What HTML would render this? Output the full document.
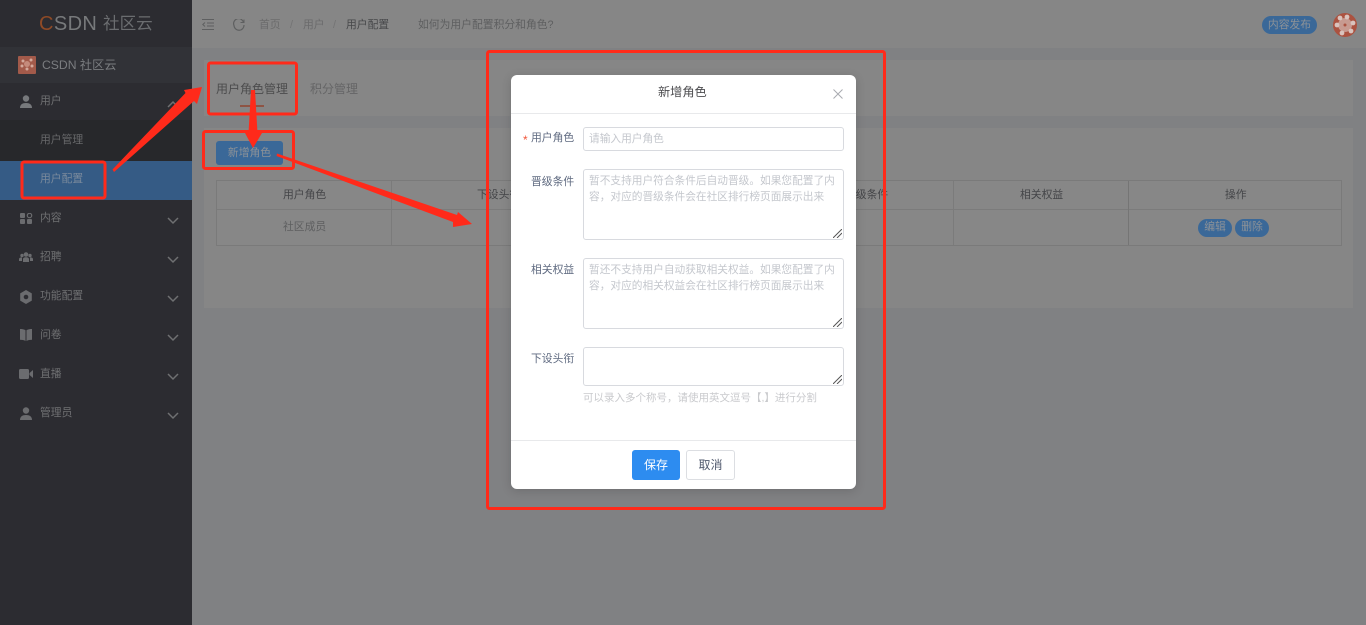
<!DOCTYPE html>
<html lang="zh-CN"><head><meta charset="utf-8"><title>用户配置</title>
<style>
*{box-sizing:border-box;margin:0;padding:0}
html,body{width:1366px;height:625px;overflow:hidden;background:#808183;font-family:"Liberation Sans","Noto Sans CJK SC","WenQuanYi Zen Hei",sans-serif;font-size:10.8px}
.a{position:absolute;white-space:nowrap}
.side{position:absolute;left:0;top:0;width:192px;height:625px;background:#2c2c31}
.mi{position:absolute;left:40px;color:#6f7072;font-size:10.8px;line-height:16px;white-space:nowrap}
.ic{position:absolute;left:19px}
.chev{position:absolute;left:167px}
.pill{position:absolute;background:#3a6898;color:#8d9297;border-radius:10px;text-align:center;white-space:nowrap}
.th{position:absolute;top:187px;color:#444548;font-size:10.8px;line-height:16px;white-space:nowrap}
.ln{position:absolute;background:#7b7b7b}
.lab{position:absolute;left:531px;color:#5f6a80;font-size:10.8px;line-height:16px;white-space:nowrap;width:44px}
.inp{position:absolute;left:583px;width:261px;border:1px solid #d8dadf;border-radius:3px;background:#fff;color:#c4c7cd;font-size:10.7px;line-height:16px;padding:0 5px;white-space:normal}
.grip{position:absolute;right:1px;bottom:1px}
</style></head><body>
<div class="side">
<div class="a" style="left:0;top:47px;width:192px;height:36px;background:#313237"></div>
<div class="a" style="left:0;top:120px;width:192px;height:41px;background:#27282b"></div>
<div class="a" style="left:0;top:161px;width:192px;height:39px;background:#355b85"></div>
<div class="a" style="left:39px;top:12px;font-size:20px;line-height:24px;letter-spacing:.4px;color:#77797b"><span style="color:#8e4a26">C</span>SDN</div>
<div class="a" style="left:103px;top:14px;font-size:16.600px;line-height:20px;color:#6b6d70">社区云</div>
<svg class="a" style="left:18px;top:56px" width="18" height="18"><rect width="18" height="18" rx="1" fill="#a25a4a"/><circle cx="9" cy="8" r="3" fill="#c58b7c"/><circle cx="5" cy="5" r="1.500" fill="#d3a99c"/><circle cx="13" cy="4" r="1.500" fill="#d3a99c"/><circle cx="4" cy="10" r="1.500" fill="#d3a99c"/><circle cx="14" cy="10" r="1.500" fill="#d3a99c"/><circle cx="9" cy="13" r="1.500" fill="#d3a99c"/></svg>
<div class="a" style="left:42px;top:57px;font-size:12.200px;line-height:17px;color:#7b7d80">CSDN 社区云</div>

<svg class="ic" style="top:95px" width="14" height="13" fill="#77797c"><circle cx="7" cy="3.500" r="3.200"/><path d="M1 13c0-3.600 2.500-5 6-5s6 1.400 6 5z"/></svg>
<div class="mi" style="top:93px">用户</div>
<svg class="chev" style="top:100px" width="12" height="8" fill="none" stroke="#6f7072" stroke-width="1.500"><path d="M1 7l5-5 5 5"/></svg>
<div class="mi" style="top:132px;color:#67686a">用户管理</div>
<div class="mi" style="top:171px;color:#7a8a9c">用户配置</div>

<svg class="ic" style="top:213px" width="14" height="11" fill="#6b6c6f"><rect x="1" y="0" width="5" height="5" rx="1"/><rect x="1" y="6" width="5" height="5" rx="1"/><rect x="8" y="6" width="5" height="5" rx="1"/><circle cx="10.500" cy="2.500" r="2.200" fill="none" stroke="#6b6c6f" stroke-width="1.200"/></svg>
<div class="mi" style="top:210px">内容</div>
<svg class="chev" style="top:217px" width="12" height="8" fill="none" stroke="#6f7072" stroke-width="1.500"><path d="M1 1l5 5 5-5"/></svg>

<svg class="ic" style="top:252px" width="14" height="10" fill="#6b6c6f"><circle cx="7" cy="2.500" r="2.300"/><circle cx="3" cy="3.500" r="1.700"/><circle cx="11" cy="3.500" r="1.700"/><path d="M4 10V7c0-1 1.300-1.800 3-1.800s3 .8 3 1.800v3zM0 9V7c0-.9 1-1.600 2.500-1.600l.5.100V9zM14 9V7c0-.9-1-1.600-2.500-1.600l-.5.100V9z"/></svg>
<div class="mi" style="top:249px">招聘</div>
<svg class="chev" style="top:256px" width="12" height="8" fill="none" stroke="#6f7072" stroke-width="1.500"><path d="M1 1l5 5 5-5"/></svg>

<svg class="ic" style="top:290px" width="14" height="14" fill="#6b6c6f"><path fill-rule="evenodd" d="M7 0l5.800 3.400v7.200L7 14l-5.800-3.400V3.400zM7 4.700a2.300 2.300 0 100 4.600 2.300 2.300 0 000-4.600z"/></svg>
<div class="mi" style="top:288px">功能配置</div>
<svg class="chev" style="top:295px" width="12" height="8" fill="none" stroke="#6f7072" stroke-width="1.500"><path d="M1 1l5 5 5-5"/></svg>

<svg class="ic" style="top:329px" width="14" height="12" fill="#6b6c6f"><path d="M1 0c2 0 4 .3 5.500 1.200V12C5 11.200 3 10.800 1 10.800zM13 0c-2 0-4 .3-5.500 1.200V12c1.500-.8 3.500-1.200 5.500-1.200z"/></svg>
<div class="mi" style="top:327px">问卷</div>
<svg class="chev" style="top:334px" width="12" height="8" fill="none" stroke="#6f7072" stroke-width="1.500"><path d="M1 1l5 5 5-5"/></svg>

<svg class="ic" style="top:369px;left:19px" width="14" height="10" fill="#6b6c6f"><rect x="0" y="0" width="10" height="10" rx="1.500"/><path d="M10.500 4L14 1v8l-3.500-3z"/></svg>
<div class="mi" style="top:366px">直播</div>
<svg class="chev" style="top:373px" width="12" height="8" fill="none" stroke="#6f7072" stroke-width="1.500"><path d="M1 1l5 5 5-5"/></svg>

<svg class="ic" style="top:407px" width="14" height="13" fill="#6b6c6f"><circle cx="7" cy="3.500" r="3.200"/><path d="M1 13c0-3.600 2.500-5 6-5s6 1.400 6 5z"/></svg>
<div class="mi" style="top:405px">管理员</div>
<svg class="chev" style="top:412px" width="12" height="8" fill="none" stroke="#6f7072" stroke-width="1.500"><path d="M1 1l5 5 5-5"/></svg>
</div>

<!-- header -->
<div class="a" style="left:192px;top:0;width:1174px;height:48px;background:#868686"></div>
<svg class="a" style="left:202px;top:19px" width="12" height="11" fill="none" stroke="#5e5f60" stroke-width="1"><path d="M0 .5h12M5 4h7M5 7h7M0 10.500h12M3 3.500L.8 5.500 3 7.500"/></svg>
<svg class="a" style="left:233px;top:19px" width="12" height="12" fill="none" stroke="#5e5f60" stroke-width="1.200"><path d="M10.500 3.500A5 5 0 101 6.500 5 5 0 0011 6"/><path d="M7.500 3.500h3.500V.5" stroke-width="1"/></svg>
<div class="a" style="left:259px;top:17px;line-height:16px;color:#6b6b6c">首页</div>
<div class="a" style="left:290px;top:17px;line-height:16px;color:#737374">/</div>
<div class="a" style="left:303px;top:17px;line-height:16px;color:#6b6b6c">用户</div>
<div class="a" style="left:333px;top:17px;line-height:16px;color:#737374">/</div>
<div class="a" style="left:346px;top:17px;line-height:16px;color:#47484a">用户配置</div>
<div class="a" style="left:418px;top:17px;line-height:16px;color:#5e5f60">如何为用户配置积分和角色?</div>
<div class="pill" style="left:1262px;top:16px;width:55px;height:18px;line-height:18px">内容发布</div>
<svg class="a" style="left:1333px;top:13px" width="24" height="24"><circle cx="12" cy="12" r="12" fill="#ab5240"/><circle cx="12" cy="12" r="7" fill="#c79a90"/><circle cx="12" cy="12" r="1.500" fill="#ab5240"/><circle cx="14" cy="4" r="2.400" fill="#d9c3bd"/><circle cx="20" cy="10" r="2.400" fill="#d9c3bd"/><circle cx="18" cy="18" r="2.400" fill="#d9c3bd"/><circle cx="9" cy="20" r="2.400" fill="#d9c3bd"/><circle cx="4" cy="12" r="2.400" fill="#d9c3bd"/><circle cx="7" cy="5" r="2.400" fill="#d9c3bd"/></svg>

<!-- cards -->
<div class="a" style="left:204px;top:60px;width:1149px;height:56px;background:#868686"></div>
<div class="a" style="left:216px;top:81px;font-size:12px;line-height:16px;color:#4c4c4d">用户角色管理</div>
<div class="a" style="left:310px;top:81px;font-size:12px;line-height:16px;color:#656566">积分管理</div>
<div class="a" style="left:240px;top:105px;width:24px;height:2px;background:#8e5444"></div>
<div class="a" style="left:204px;top:128px;width:1149px;height:180px;background:#868686"></div>
<div class="a" style="left:216px;top:141px;width:67px;height:24px;background:#3a6898;border-radius:3px;color:#8d9297;text-align:center;line-height:24px">新增角色</div>

<!-- table -->
<div class="a" style="left:216px;top:180px;width:1126px;height:66px;background:#878787;border:1px solid #7a7a7a"></div>
<div class="ln" style="left:217px;top:209px;width:1124px;height:1px"></div>
<div class="ln" style="left:391px;top:181px;width:1px;height:64px"></div>
<div class="ln" style="left:953px;top:181px;width:1px;height:64px"></div>
<div class="ln" style="left:1128px;top:181px;width:1px;height:64px;background:#757575"></div>
<div class="th" style="left:283px">用户角色</div>
<div class="th" style="left:477px">下设头衔</div>
<div class="th" style="left:845px">晋级条件</div>
<div class="th" style="left:1020px">相关权益</div>
<div class="th" style="left:1225px">操作</div>
<div class="a" style="left:283px;top:219px;line-height:16px;color:#5e5f60">社区成员</div>
<div class="pill" style="left:1198px;top:219px;width:34px;height:18px;line-height:17px;border-radius:9px">编辑</div>
<div class="pill" style="left:1235px;top:219px;width:34px;height:18px;line-height:17px;border-radius:9px">删除</div>

<!-- modal -->
<div class="a" style="left:511px;top:75px;width:345px;height:414px;background:#fff;border-radius:6px;box-shadow:0 2px 10px rgba(0,0,0,.15)"></div>
<div class="a" style="left:511px;top:113px;width:345px;height:1px;background:#e8e9eb"></div>
<div class="a" style="left:511px;top:440px;width:345px;height:1px;background:#e8e9eb"></div>
<div class="a" style="left:658px;top:84px;font-size:12.200px;line-height:16px;color:#4c4c4f">新增角色</div>
<svg class="a" style="left:833px;top:89px" width="10" height="10" fill="none" stroke="#a9abb0" stroke-width="1"><path d="M.5.5l9 9M9.500.5l-9 9"/></svg>
<div class="a" style="left:523px;top:132px;font-size:12px;line-height:16px;color:#f0553a">*</div>
<div class="lab" style="top:130px">用户角色</div>
<div class="inp" style="top:127px;height:24px;line-height:22px">请输入用户角色</div>
<div class="lab" style="top:174px">晋级条件</div>
<div class="inp" style="top:169px;height:71px;padding-top:3px">暂不支持用户符合条件后自动晋级。如果您配置了内容，对应的晋级条件会在社区排行榜页面展示出来<svg class="grip" width="9" height="9" stroke="#555" stroke-width="1"><path d="M0 9l9-9M4 9l5-5"/></svg></div>
<div class="lab" style="top:262px">相关权益</div>
<div class="inp" style="top:258px;height:71px;padding-top:3px">暂还不支持用户自动获取相关权益。如果您配置了内容，对应的相关权益会在社区排行榜页面展示出来<svg class="grip" width="9" height="9" stroke="#555" stroke-width="1"><path d="M0 9l9-9M4 9l5-5"/></svg></div>
<div class="lab" style="top:351px">下设头衔</div>
<div class="inp" style="top:347px;height:39px"><svg class="grip" width="9" height="9" stroke="#555" stroke-width="1"><path d="M0 9l9-9M4 9l5-5"/></svg></div>
<div class="a" style="left:583px;top:390px;font-size:10.500px;line-height:16px;color:#c9cacd">可以录入多个称号，请使用英文逗号【,】进行分割</div>
<div class="a" style="left:632px;top:450px;width:48px;height:30px;background:#2d8cf0;border-radius:3px;color:#fff;text-align:center;line-height:30px;font-size:12px">保存</div>
<div class="a" style="left:686px;top:450px;width:49px;height:30px;background:#fff;border:1px solid #dcdee2;border-radius:3px;color:#515a6e;text-align:center;line-height:28px;font-size:12px">取消</div>

<!-- annotations -->
<svg class="a" style="left:0;top:0" width="1366" height="625" fill="none">
<g stroke="#ff2a1a" stroke-width="3" stroke-linejoin="round">
<rect x="22" y="162" width="83" height="36" rx="2"/>
<rect x="208.500" y="63" width="88" height="51" rx="2"/>
<rect x="203.500" y="131.500" width="90" height="37" rx="2"/>
<rect x="487.500" y="51.500" width="397" height="457" rx="2"/>
</g>
<g fill="#ff2a1a">
<path d="M112.500 169.500L114 172 194 101 197 104 202 87 184 90 185.500 93z"/>
<path d="M251 90L255 90 257.500 133 262 133 253 148 245 133 248.500 133z"/>
<path d="M277 153.500L276.500 156 453 222 453 227 472 224 458 212 457 215z"/>
</g>
</svg>
</body></html>
